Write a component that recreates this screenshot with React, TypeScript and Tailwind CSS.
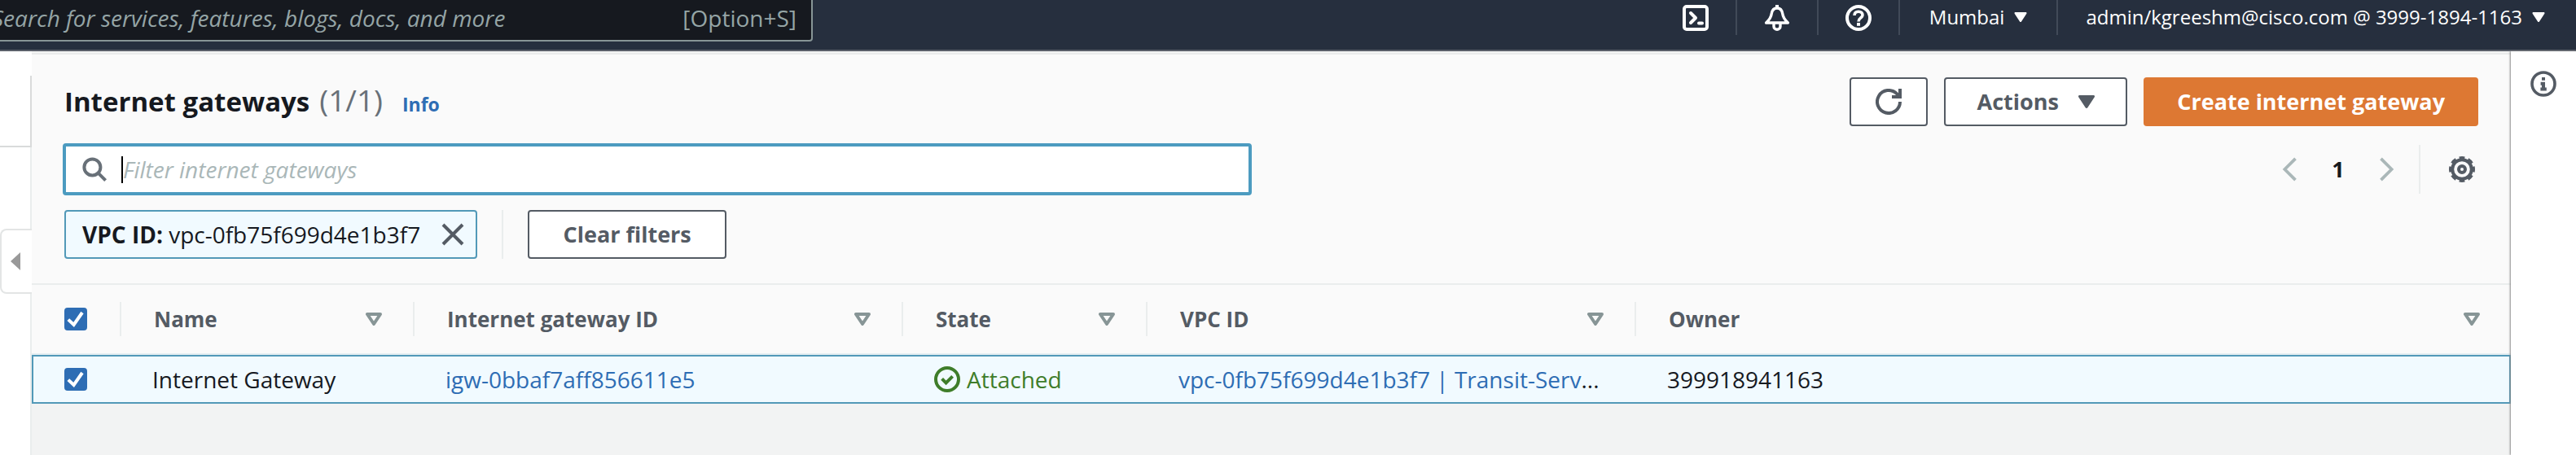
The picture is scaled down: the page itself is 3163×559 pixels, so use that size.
import type { ReactNode } from "react";

type IconProps = { className?: string };

const stroke = { fill: "none", stroke: "currentColor", strokeWidth: 2 } as const;

function SolidCaret({ className }: IconProps) {
  return (
    <svg viewBox="0 0 20 16" className={className} fill="currentColor" aria-hidden="true">
      <path d="M1.5 0h17c1.2 0 1.9 1.200 1.300 2.200L11.300 15.200c-.6 1-2 1-2.600 0L.2 2.200C-.4 1.200.3 0 1.500 0z" />
    </svg>
  );
}

function SortCaret() {
  return (
    <svg viewBox="0 0 20 16" className="h-4 w-5 shrink-0 text-[#879596]" aria-hidden="true">
      <path d="M2 2h16L10 14z" fill="none" stroke="currentColor" strokeWidth="4" strokeLinejoin="round" />
    </svg>
  );
}

function TerminalIcon() {
  return (
    <svg viewBox="0 0 16 16" className="size-8" {...stroke} strokeLinecap="round" strokeLinejoin="round" aria-hidden="true">
      <rect x="1" y="1" width="14" height="14" rx="1.500" />
      <path d="m5 5 3 3-3 3M10 11.200h2" />
    </svg>
  );
}

function BellIcon() {
  return (
    <svg viewBox="0 0 16 16" className="size-8" {...stroke} strokeLinejoin="round" aria-hidden="true">
      <path d="M8 0v2" />
      <path d="M8 2C5.800 2 4.900 3.500 4.600 5.500 4.300 7.800 3.300 9.200 1.300 11h13.400c-2-1.800-3-3.200-3.300-5.500C11.100 3.500 10.200 2 8 2z" strokeWidth="1.700" />
      <path d="M6 11.500v1.700a2 1.900 0 0 0 4 0v-1.700" strokeWidth="1.700" />
    </svg>
  );
}

function HelpIcon() {
  return (
    <svg viewBox="0 0 16 16" className="size-8" {...stroke} aria-hidden="true">
      <circle cx="8" cy="8" r="7" />
      <path d="M5.500 6.500C5.500 4.900 6.500 4.100 8 4.100s2.500.9 2.500 2.200C10.500 8 8 8 8 10.200" strokeWidth="1.800" />
      <path d="M8 11v1.900" />
    </svg>
  );
}

function InfoIcon() {
  return (
    <svg viewBox="0 0 16 16" className="size-8" {...stroke} aria-hidden="true">
      <circle cx="8" cy="8" r="7" strokeWidth="1.800" />
      <path d="M8 4v1.900M6.300 7.900H8v3.300M6.200 11.200h3.700" />
    </svg>
  );
}

function RefreshIcon() {
  return (
    <svg viewBox="0 0 16 16" className="size-8" {...stroke} aria-hidden="true">
      <path d="M15 8a7 7 0 1 1-2-4.900L15 5.200" />
      <path d="M10 5h5V0" />
    </svg>
  );
}

function SearchIcon() {
  return (
    <svg viewBox="0 0 15 15" className="size-[30px] shrink-0 text-[#687078]" {...stroke} aria-hidden="true">
      <circle cx="6.200" cy="6.200" r="5" />
      <path d="m9.800 9.800 4.500 4.500" />
    </svg>
  );
}

function GearIcon() {
  return (
    <svg viewBox="0 0 16 16" className="size-8" {...stroke} aria-hidden="true">
      <circle cx="8" cy="8" r="5.900" />
      <circle cx="8" cy="8" r="7" pathLength="80" strokeDasharray="6 4" strokeDashoffset="3" />
      <circle cx="8" cy="8" r="2" />
    </svg>
  );
}

function CheckCircleIcon() {
  return (
    <svg viewBox="0 0 16 16" className="size-8 shrink-0" {...stroke} aria-hidden="true">
      <circle cx="8" cy="8" r="7" />
      <path d="m4.800 7.700 2.500 2.500 4-4" />
    </svg>
  );
}

function AngleIcon({ d }: { d: string }) {
  return (
    <svg viewBox="0 0 10 16" className="h-[30px] w-5" {...stroke} aria-hidden="true">
      <path d={d} />
    </svg>
  );
}

function NavIcon({ children, label }: { children: ReactNode; label: string }) {
  return (
    <button type="button" aria-label={label} className="flex h-full items-center border-r-2 border-[#414a58] px-[33px]">
      {children}
    </button>
  );
}

function NavMenu({ children }: { children: ReactNode }) {
  return (
    <button type="button" className="flex h-full items-start border-r-2 border-[#414a58] px-9 last:border-r-0 last:pl-[34px] last:pr-[38px]">
      <span className="flex h-[41px] items-center gap-3">
        {children}
        <SolidCaret className="h-3 w-4" />
      </span>
    </button>
  );
}

function CheckBox({ label }: { label: string }) {
  return (
    <span className="relative flex size-7">
      <input
        type="checkbox"
        defaultChecked
        aria-label={label}
        className="peer size-7 appearance-none rounded-sm border-2 border-[#aab7b8] bg-white checked:border-[#2e6db4] checked:bg-[#2e6db4]"
      />
      <svg
        viewBox="0 0 14 14"
        className="pointer-events-none absolute inset-0 hidden size-7 text-white peer-checked:block"
        {...stroke}
        aria-hidden="true"
      >
        <path d="m2.400 7.300 3.400 3.200L11 3" />
      </svg>
    </span>
  );
}

const headCell = "h-[86px] border-b-2 border-[#e4eef2] p-0 text-left font-bold";

function HeaderCell({ label, last }: { label: string; last?: boolean }) {
  return (
    <th scope="col" className={headCell}>
      <button
        type="button"
        className={`flex h-[42px] w-full items-center justify-between pl-10 pr-[38px] ${last ? "" : "border-r-2 border-[#eaeded]"}`}
      >
        {label}
        <SortCaret />
      </button>
    </th>
  );
}

const outlineButton =
  "flex h-[60px] items-center justify-center rounded-sm border-2 border-[#545b64] bg-white text-[27px] font-bold text-[#545b64]";

const rowCell = "h-[60px] border-y-2 border-[#5299b8] py-0 pl-[38px] pr-0";

export default function App() {
  return (
    <div className="flex min-h-screen flex-col overflow-hidden bg-[#f2f3f3] font-['Open_Sans','Noto_Sans',sans-serif] text-[28px] leading-9 text-[#16191f]">
      <header className="flex h-[63px] items-start justify-between border-b-2 border-[#5a5f69] bg-[#262f3e] text-[24px] text-white">
        <label className="-ml-10 -mt-2 flex h-[59px] w-[1038px] items-center rounded-sm border-2 border-[#879596] bg-[#16191f] pl-7 pr-[18px] text-[28px] text-[#95a5a6]">
          <input
            type="search"
            aria-label="Search"
            placeholder="Search for services, features, blogs, docs, and more"
            className="min-w-0 flex-1 bg-transparent italic outline-none placeholder:text-[#95a5a6]"
          />
          <span>[Option+S]</span>
        </label>
        <nav className="flex h-[43px] items-start">
          <NavIcon label="CloudShell"><TerminalIcon /></NavIcon>
          <NavIcon label="Notifications"><BellIcon /></NavIcon>
          <NavIcon label="Help"><HelpIcon /></NavIcon>
          <NavMenu>Mumbai</NavMenu>
          <NavMenu>admin/kgreeshm@cisco.com @ 3999-1894-1163</NavMenu>
        </nav>
      </header>

      <div className="flex flex-1">
        <aside className="flex w-[39px] shrink-0 flex-col bg-white pt-[30px]">
          <div className="h-[88px] border-b-2 border-r-2 border-[#d9dbdb]" />
          <div className="h-[100px] border-r-2 border-[#eaeded]" />
          <button
            type="button"
            aria-label="Open navigation"
            className="flex h-20 items-center justify-end rounded-l-lg border-y-2 border-l-2 border-[#e3e5e5] pr-[14px]"
          >
            <svg viewBox="0 0 12 22" className="h-[22px] w-3 text-[#999]" fill="currentColor" aria-hidden="true">
              <path d="M12 0v22L0 11z" />
            </svg>
          </button>
          <div className="flex-1 border-r-2 border-[#eaeded]" />
        </aside>

        <main className="min-w-0 flex-1">
          <section className="mt-[2px] border-t-2 border-[#eaebeb] bg-[#fafafa]">
            <div className="flex items-center justify-between px-10 pt-7">
              <div className="flex items-baseline gap-3 leading-10">
                <h1 className="text-[33px] font-bold">Internet gateways</h1>
                <span className="text-[37px] text-[#687078]">(1/1)</span>
                <a href="#info" className="ml-3 text-[23px] font-bold text-[#2e6db4]">Info</a>
              </div>
              <div className="flex gap-5">
                <button type="button" aria-label="Refresh" className={`${outlineButton} w-24`}><RefreshIcon /></button>
                <button type="button" className={`${outlineButton} w-[225px] gap-6`}>
                  Actions <SolidCaret className="h-4 w-5" />
                </button>
                <button type="button" className="h-[60px] rounded-sm bg-[#dd7833] px-[41px] text-[27px] font-bold text-white">
                  Create internet gateway
                </button>
              </div>
            </div>

            <div className="flex items-center justify-between pl-[38px] pr-11 pt-[21px]">
              <div className="flex h-16 w-[1460px] items-center rounded-sm border-4 border-[#4c9bc0] bg-white pl-5">
                <SearchIcon />
                <span className="ml-[18px] h-[33px] w-[2px] bg-black" />
                <input
                  type="text"
                  aria-label="Filter internet gateways"
                  placeholder="Filter internet gateways"
                  className="min-w-0 flex-1 bg-transparent outline-none placeholder:italic placeholder:text-[#aab7b8]"
                />
              </div>
              <div className="flex items-center">
                <button type="button" aria-label="Previous page" className="text-[#aab7b8]"><AngleIcon d="M9 1 2 8l7 7" /></button>
                <span className="w-[100px] text-center text-[27px] font-bold">1</span>
                <button type="button" aria-label="Next page" className="text-[#aab7b8]"><AngleIcon d="m1 1 7 7-7 7" /></button>
                <span className="ml-[29px] mr-[35px] h-[60px] w-[2px] bg-[#eaeded]" />
                <button type="button" aria-label="Preferences" className="text-[#545b64]"><GearIcon /></button>
              </div>
            </div>

            <div className="flex items-center pb-[30px] pl-10 pt-[18px]">
              <div className="flex h-[60px] items-center rounded-sm border-2 border-[#5299b8] bg-[#f1faff] pl-5 pr-[14px]">
                <span><b>VPC ID:</b> vpc-0fb75f699d4e1b3f7</span>
                <button type="button" aria-label="Remove filter" className="ml-[26px] text-[#545b64]">
                  <svg viewBox="0 0 14 14" className="size-7" {...stroke} aria-hidden="true">
                    <path d="m1 1 12 12M13 1 1 13" />
                  </svg>
                </button>
              </div>
              <span className="mx-[30px] h-[60px] w-[2px] bg-[#eaeded]" />
              <button type="button" className={`${outlineButton} w-[244px]`}>Clear filters</button>
            </div>

            <table className="w-full table-fixed border-separate border-spacing-0 border-t-2 border-[#eaeded]">
              <colgroup>
                <col className="w-[110px]" />
                <col className="w-[360px]" />
                <col className="w-[600px]" />
                <col className="w-[300px]" />
                <col className="w-[600px]" />
                <col />
              </colgroup>
              <thead className="text-[26px] text-[#545b64]">
                <tr>
                  <th scope="col" className={headCell}>
                    <div className="flex h-[42px] items-center border-r-2 border-[#eaeded] pl-10"><CheckBox label="Select all" /></div>
                  </th>
                  <HeaderCell label="Name" />
                  <HeaderCell label="Internet gateway ID" />
                  <HeaderCell label="State" />
                  <HeaderCell label="VPC ID" />
                  <HeaderCell label="Owner" last />
                </tr>
              </thead>
              <tbody>
                <tr className="whitespace-nowrap bg-[#f1faff]">
                  <td className={`${rowCell} border-l-2`}><CheckBox label="Select Internet Gateway" /></td>
                  <td className={rowCell}>Internet Gateway</td>
                  <td className={rowCell}><a href="#igw" className="text-[#2e6db4]">igw-0bbaf7aff856611e5</a></td>
                  <td className={rowCell}>
                    <span className="flex items-center gap-2 text-[#3f7d2a]"><CheckCircleIcon />Attached</span>
                  </td>
                  <td className={rowCell}>
                    <a href="#vpc" className="text-[#2e6db4]">vpc-0fb75f699d4e1b3f7 | Transit-Serv</a>...
                  </td>
                  <td className={`${rowCell} border-r-2`}>399918941163</td>
                </tr>
              </tbody>
            </table>
          </section>
        </main>

        <aside className="flex w-20 shrink-0 items-start justify-center bg-white pt-6 shadow-[-1px_0_2px_#888]">
          <button type="button" aria-label="Open help panel" className="text-[#545b64]"><InfoIcon /></button>
        </aside>
      </div>
    </div>
  );
}
